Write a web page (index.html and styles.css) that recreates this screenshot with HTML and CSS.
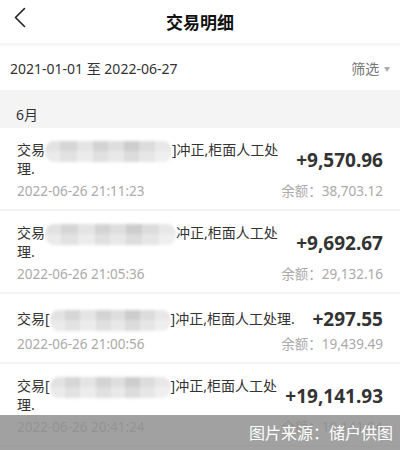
FILE: index.html
```html
<!DOCTYPE html>
<html lang="zh-CN">
<head>
<meta charset="utf-8">
<title>交易明细</title>
<link rel="stylesheet" href="styles.css">
</head>
<body>
<div class="page">
  <header class="nav">
    <svg class="back" width="14" height="21" viewBox="0 0 14 21"><path d="M11.5 1.5 L2.5 10.5 L11.5 19.5" fill="none" stroke="#222" stroke-width="1.6" stroke-linecap="round" stroke-linejoin="round"/></svg>
    <h1 class="title">交易明细</h1>
    <span></span>
  </header>
  <div class="range">
    <span class="range-text">2021-01-01 至 2022-06-27</span>
    <span class="filter">筛选 <span class="caret">▼</span></span>
  </div>
  <div class="month">6月</div>
  <ul class="list">
    <li class="item">
      <div class="row">
        <p class="desc">交易<span class="mosaic m1"></span>]冲正,柜面人工处理.</p>
        <span class="amount">+9,570.96</span>
      </div>
      <div class="row meta">
        <span>2022-06-26 21:11:23</span>
        <span>余额：38,703.12</span>
      </div>
    </li>
    <li class="item">
      <div class="row">
        <p class="desc">交易<span class="mosaic m2"></span>冲正,柜面人工处理.</p>
        <span class="amount">+9,692.67</span>
      </div>
      <div class="row meta">
        <span>2022-06-26 21:05:36</span>
        <span>余额：29,132.16</span>
      </div>
    </li>
    <li class="item">
      <div class="row">
        <p class="desc">交易[<span class="mosaic m3"></span>]冲正,柜面人工处理.</p>
        <span class="amount">+297.55</span>
      </div>
      <div class="row meta">
        <span>2022-06-26 21:00:56</span>
        <span>余额：19,439.49</span>
      </div>
    </li>
    <li class="item">
      <div class="row">
        <p class="desc">交易[<span class="mosaic m4"></span>]冲正,柜面人工处理.</p>
        <span class="amount">+19,141.93</span>
      </div>
      <div class="row meta">
        <span>2022-06-26 20:41:24</span>
        <span>余额：19,141.94</span>
      </div>
    </li>
  </ul>
  <div class="credit">图片来源：储户供图</div>
</div>
</body>
</html>
```
FILE: styles.css
```css
* { box-sizing: border-box; }
html, body { margin: 0; padding: 0; }
body {
  background: #fff;
  font-family: "Noto Sans", "Noto Sans CJK SC", sans-serif;
  color: #333;
}
.page {
  position: relative;
  width: 400px;
  height: 450px;
  overflow: hidden;
}
.nav {
  height: 46px;
  display: grid;
  grid-template-columns: 60px 1fr 60px;
  align-items: center;
  border-bottom: 3px solid #f6f6f6;
}
.back { margin-left: 13px; margin-top: -8px; }
.title {
  margin: 0;
  text-align: center;
  font-family: "Noto Sans CJK SC", sans-serif;
  font-size: 17px;
  font-weight: 700;
  color: #111;
}
.range {
  height: 44px;
  display: flex;
  align-items: center;
  justify-content: space-between;
  padding: 0 10px 0 10px;
  font-size: 14px;
}
.range-text { color: #333; }
.filter { color: #777; font-size: 14px; }
.caret { font-size: 6px; color: #aaa; vertical-align: 3px; margin-left: 1px; }
.month {
  background: #f4f4f4;
  height: 38px;
  padding: 15px 0 0 16px;
  font-size: 14px;
  line-height: 20px;
  color: #333;
}
.list { list-style: none; margin: 0; padding: 0; }
.item {
  padding: 13px 17px 9px 17px;
  border-bottom: 2px solid #f3f3f3;
}
.row {
  display: flex;
  align-items: center;
  justify-content: space-between;
  gap: 3px;
}
.desc {
  margin: 0;
  flex: 1;
  font-size: 14px;
  line-height: 18px;
  color: #333;
}
.amount {
  flex-shrink: 0;
  font-size: 19px;
  line-height: 24px;
  font-weight: 700;
  color: #333;
}
.meta {
  margin-top: 4px;
  font-size: 13.5px;
  line-height: 18px;
  color: #aaa;
}
.mosaic {
  display: inline-block;
  height: 17px;
  vertical-align: -5px;
  border-radius: 9px;
  transform: scaleY(1.25);
  filter: blur(1.3px);
  background:
    linear-gradient(to bottom, rgba(255,255,255,0) 0, rgba(255,255,255,0) 50%, rgba(255,255,255,0.3) 50%),
    linear-gradient(to right, #e2e2e2 0 12%, #d6d6d6 12% 25%, #e4e4e4 25% 38%, #d3d3d3 38% 50%, #dedede 50% 62%, #cdcdcd 62% 74%, #dcdcdc 74% 87%, #e8e8e8 87% 100%);
}
.m1 { width: 127px; }
.m2 { width: 131px; }
.m3 { width: 121px; }
.m4 { width: 121px; }
.credit {
  position: absolute;
  left: 0;
  right: 0;
  bottom: 0;
  height: 35px;
  background: rgba(140,140,140,0.82);
  color: #fff;
  font-family: "Noto Sans CJK SC", sans-serif;
  font-size: 16px;
  line-height: 35px;
  text-align: right;
  padding-right: 7px;
}
```
